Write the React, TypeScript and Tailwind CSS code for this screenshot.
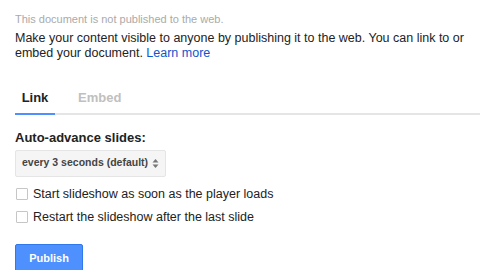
import React from 'react';

export default function App() {
  return (
    <div className="w-[480px] h-[270px] overflow-hidden bg-white font-['Liberation_Sans',Arial,sans-serif] pl-[15px] pt-[12px]">
      <p className="text-[11px] leading-[14px] text-[#aaaaaa]">This document is not published to the web.</p>
      <p className="mt-[5px] text-[12.5px] leading-[15px] text-[#222222]">
        Make your content visible to anyone by publishing it to the web. You can link to or embed your document.{' '}
        <a className="text-[#15c]" href="#">Learn more</a>
      </p>

      <div className="mt-[27px] flex border-b-2 border-[#e5e5e5]">
        <div className="w-[40px] -mb-[2px] border-b-2 border-[#4d90fe] pb-[5px] text-center text-[13px] font-bold text-[#222222]">Link</div>
        <div className="ml-[23px] pb-[5px] text-[13px] font-bold text-[#c0c0c0]">Embed</div>
      </div>

      <div className="mt-[15px] text-[13px] font-bold text-[#222222] leading-[15px]">Auto-advance slides:</div>
      <div className="mt-[5px] flex h-[27px] w-[151px] items-center justify-between rounded-[2px] border border-[#e5e5e5] bg-[#f5f5f5] pl-[6px] pr-[6px]">
        <span className="whitespace-nowrap text-[10.5px] font-bold text-[#444444]">every 3 seconds (default)</span>
        <svg width="7" height="11" viewBox="0 0 7 11">
          <path d="M3.5 1 L6.5 4.5 H0.5 Z" fill="#777" />
          <path d="M3.5 10 L6.5 6.5 H0.5 Z" fill="#777" />
        </svg>
      </div>

      <div className="mt-[11px] flex flex-col gap-[10px]">
        <label className="flex items-center gap-[5px] text-[12.5px] leading-[13px] text-[#222222]">
          <span className="ml-[1px] h-[12px] w-[12px] rounded-[1px] border border-[#c6c6c6] bg-white" />
          Start slideshow as soon as the player loads
        </label>
        <label className="flex items-center gap-[5px] text-[12.5px] leading-[13px] text-[#222222]">
          <span className="ml-[1px] h-[12px] w-[12px] rounded-[1px] border border-[#c6c6c6] bg-white" />
          Restart the slideshow after the last slide
        </label>
      </div>

      <button className="mt-[20px] h-[29px] w-[68px] rounded-[2px] border border-[#3079ed] bg-[#4d90fe] text-[11px] font-bold text-white">
        Publish
      </button>
    </div>
  );
}
